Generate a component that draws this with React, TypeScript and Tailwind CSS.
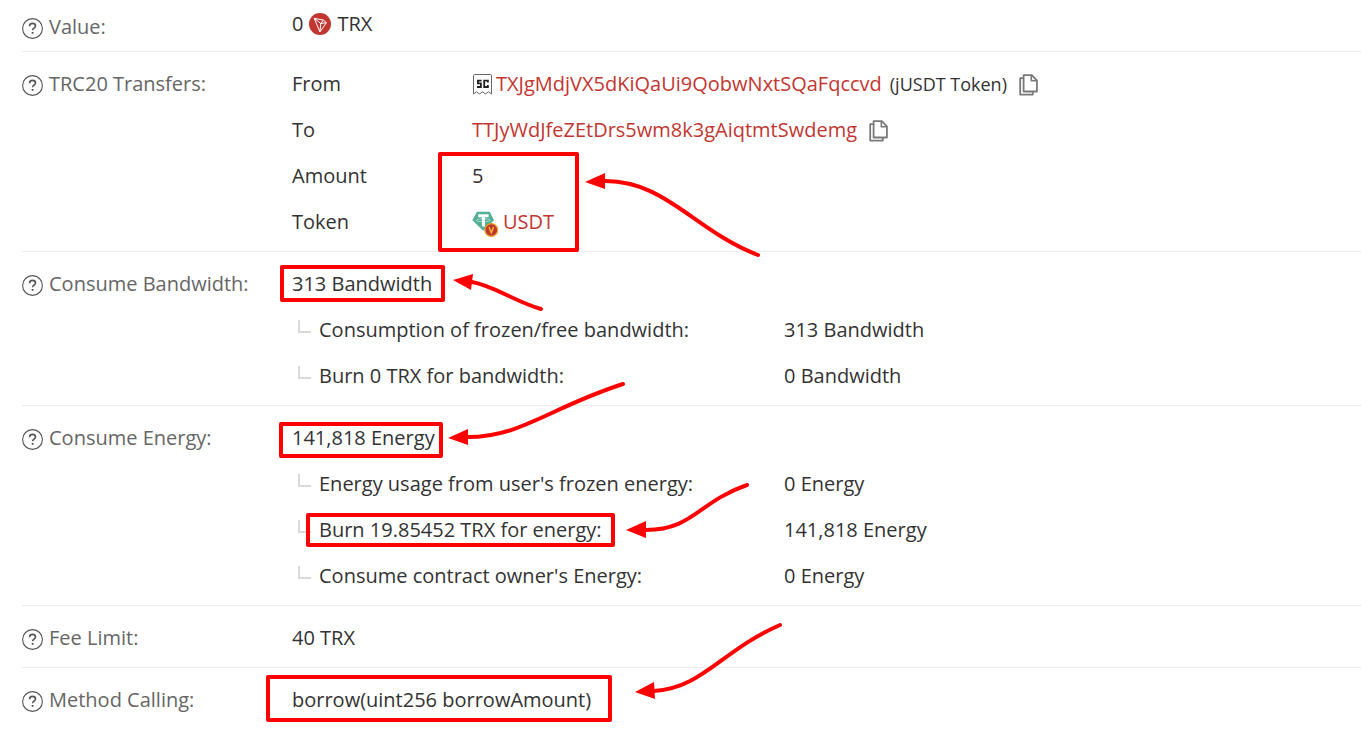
import { ReactNode } from 'react'

type UsageLine = { label: string; value: string }

const bandwidthLines: UsageLine[] = [
  { label: 'Consumption of frozen/free bandwidth:', value: '313 Bandwidth' },
  { label: 'Burn 0 TRX for bandwidth:', value: '0 Bandwidth' },
]

const energyLines: UsageLine[] = [
  { label: "Energy usage from user's frozen energy:", value: '0 Energy' },
  { label: 'Burn 19.85452 TRX for energy:', value: '141,818 Energy' },
  { label: "Consume contract owner's Energy:", value: '0 Energy' },
]

function HelpIcon() {
  return (
    <svg viewBox="0 0 21 21" className="w-[21px] h-[21px] mt-[2px] shrink-0" fill="none" stroke="#555" aria-hidden="true">
      <circle cx="10.5" cy="10.5" r="9.9" strokeWidth="1.1" />
      <path d="M7.5 8.2c0-1.8 1.2-2.8 3-2.8s3 1 3 2.5c0 2.2-2.9 2.3-2.9 4.4" strokeWidth="1.6" />
      <path d="M10.6 14v1.8" strokeWidth="1.8" />
    </svg>
  )
}

function TronIcon() {
  return (
    <svg viewBox="0 0 22 22" className="w-[22px] h-[22px]" fill="none" aria-hidden="true">
      <circle cx="11" cy="11" r="11" fill="#c23631" />
      <path
        d="M5.2 5.3l9.2 1.8 3 2.6-6.5 9.2zM5.2 5.3l6.6 5.2 2.6-3.4M11.8 10.5l5.6-.8M11.8 10.5l-.9 8.4"
        stroke="#fff"
        strokeWidth="1"
        strokeLinejoin="round"
      />
    </svg>
  )
}

// Smart contract badge in front of the sender address
function ContractIcon() {
  return (
    <svg viewBox="0 0 20 21" className="w-[20px] h-[21px]" fill="none" aria-hidden="true">
      <path
        d="M1.5 20V1.7c0-.7.4-1.2 1.2-1.2h15.6c.8 0 1.2.5 1.2 1.2V20l-3-2.2-3 2.2-3-2.2-3 2.2-3-2.2z"
        stroke="#666"
      />
      <path d="M9.6 6.6H5.9v2.8h3V13H5M15.9 8.6v-2h-3.7V13h3.7v-2" stroke="#222" strokeWidth="1.8" />
    </svg>
  )
}

function CopyIcon() {
  return (
    <svg viewBox="0 0 19 22" className="w-[19px] h-[22px]" fill="none" stroke="#7a7a7a" strokeWidth="1.8" strokeLinejoin="round" aria-hidden="true">
      <path d="M4.6 1.2h8.2l5.1 5.1v11.2H4.6z" />
      <path d="M12.3 1.2v5.5h5.5" strokeWidth="1.6" />
      <path d="M4.4 4.2H1.2v16.4h12.6v-3" />
    </svg>
  )
}

function TetherIcon() {
  return (
    <svg viewBox="0 0 27 26" className="w-[27px] h-[26px]" fill="none" aria-hidden="true">
      <path d="M5 .8h12.8L22 9.2 11.2 19.8.4 9.2z" fill="#50af95" />
      <path d="M6.2 4.8h10.4M11.4 5v10.4" stroke="#fff" strokeWidth="3" />
      <ellipse cx="11.4" cy="9.3" rx="7" ry="1.5" stroke="#fff" strokeWidth=".5" />
      <circle cx="19.3" cy="19" r="6.4" fill="#c23631" stroke="#e5a52a" strokeWidth="1.2" />
      <path d="M17 16l2.3 5.8 2.3-5.8" stroke="#f5b92e" strokeWidth="1.5" />
    </svg>
  )
}

function CopyButton({ label }: { label: string }) {
  return (
    <button type="button" aria-label={label} className="ml-3 mt-[2px] cursor-pointer">
      <CopyIcon />
    </button>
  )
}

function Section({ label, children }: { label: string; children: ReactNode }) {
  return (
    <div className="flex border-b border-[#ececec] pt-[9px] pb-[6px] last:border-b-0">
      <dt className="flex h-[46px] w-[270px] shrink-0 items-center gap-[6px] text-[#666]">
        <HelpIcon />
        {label}
      </dt>
      <dd className="min-w-0 flex-1">{children}</dd>
    </div>
  )
}

function TransferLine({ label, children }: { label: string; children: ReactNode }) {
  return (
    <div className="flex h-[46px] items-center">
      <dt className="w-[180px] shrink-0">{label}</dt>
      <dd className="flex items-center">{children}</dd>
    </div>
  )
}

function Usage({ total, lines }: { total: string; lines: UsageLine[] }) {
  return (
    <>
      <div className="flex h-[46px] items-center">{total}</div>
      <ul>
        {lines.map((line) => (
          <li key={line.label} className="flex h-[46px] items-center">
            <span className="ml-[6px] mr-2 mb-2 h-[13px] w-[13px] border-b-2 border-l-2 border-[#d9d9d9]" />
            <span className="w-[465px] shrink-0">{line.label}</span>
            <span>{line.value}</span>
          </li>
        ))}
      </ul>
    </>
  )
}

// Red marker boxes and arrows drawn on top of the details
function Annotations() {
  return (
    <svg viewBox="0 0 1361 729" className="pointer-events-none absolute left-0 top-0 h-[729px] w-[1361px]" fill="none" aria-hidden="true">
      <g stroke="#fe0000" strokeWidth="4" strokeLinejoin="round" strokeLinecap="round">
        <rect x="440" y="154" width="137" height="96" />
        <rect x="282" y="267" width="161" height="33" />
        <rect x="281" y="424" width="160" height="32" />
        <rect x="308" y="515" width="305" height="30" />
        <rect x="268" y="677" width="342" height="43" />
        <path d="M604 181C665 180 695 231 758 255" />
        <path d="M472 282C495 286 513 301 541 309" />
        <path d="M468 437C521 437 551 407 623 384" />
        <path d="M646 530C693 530 698 502 747 485" />
        <path d="M654 691C703 688 722 650 780 625" />
      </g>
      <g fill="#fe0000">
        <path d="M585 182l20-9v16z" />
        <path d="M453 280l20-6-2 16z" />
        <path d="M448 438l20-9v16z" />
        <path d="M626 530l20-9v17z" />
        <path d="M635 692l19-10 1 17z" />
      </g>
    </svg>
  )
}

function App() {
  return (
    <main className="relative overflow-hidden bg-white pl-[22px] font-['Open_Sans','Noto_Sans',sans-serif] text-[20px] leading-7 text-[#333]">
      <dl>
        <div className="flex h-[52px] border-b border-[#ececec]">
          <dt className="flex h-[46px] w-[270px] shrink-0 items-center gap-[6px] pt-2 text-[#666]">
            <HelpIcon />
            Value:
          </dt>
          <dd className="flex h-12 items-center gap-[6px]">
            0 <TronIcon /> TRX
          </dd>
        </div>

        <Section label="TRC20 Transfers:">
          <dl>
            <TransferLine label="From">
              <ContractIcon />
              <a href="#from" className="ml-1 text-[#c23631]">TXJgMdjVX5dKiQaUi9QobwNxtSQaFqccvd</a>
              <span className="ml-2 text-[18px]">(jUSDT Token)</span>
              <CopyButton label="Copy sender address" />
            </TransferLine>
            <TransferLine label="To">
              <a href="#to" className="text-[#c23631]">TTJyWdJfeZEtDrs5wm8k3gAiqtmtSwdemg</a>
              <CopyButton label="Copy recipient address" />
            </TransferLine>
            <TransferLine label="Amount">5</TransferLine>
            <TransferLine label="Token">
              <span className="mt-1"><TetherIcon /></span>
              <a href="#usdt" className="ml-1 text-[#c23631]">USDT</a>
            </TransferLine>
          </dl>
        </Section>

        <Section label="Consume Bandwidth:">
          <Usage total="313 Bandwidth" lines={bandwidthLines} />
        </Section>

        <Section label="Consume Energy:">
          <Usage total="141,818 Energy" lines={energyLines} />
        </Section>

        <Section label="Fee Limit:">
          <div className="flex h-[46px] items-center">40 TRX</div>
        </Section>

        <Section label="Method Calling:">
          <div className="flex h-[46px] items-center">borrow(uint256 borrowAmount)</div>
        </Section>
      </dl>
      <Annotations />
    </main>
  )
}

export default App
